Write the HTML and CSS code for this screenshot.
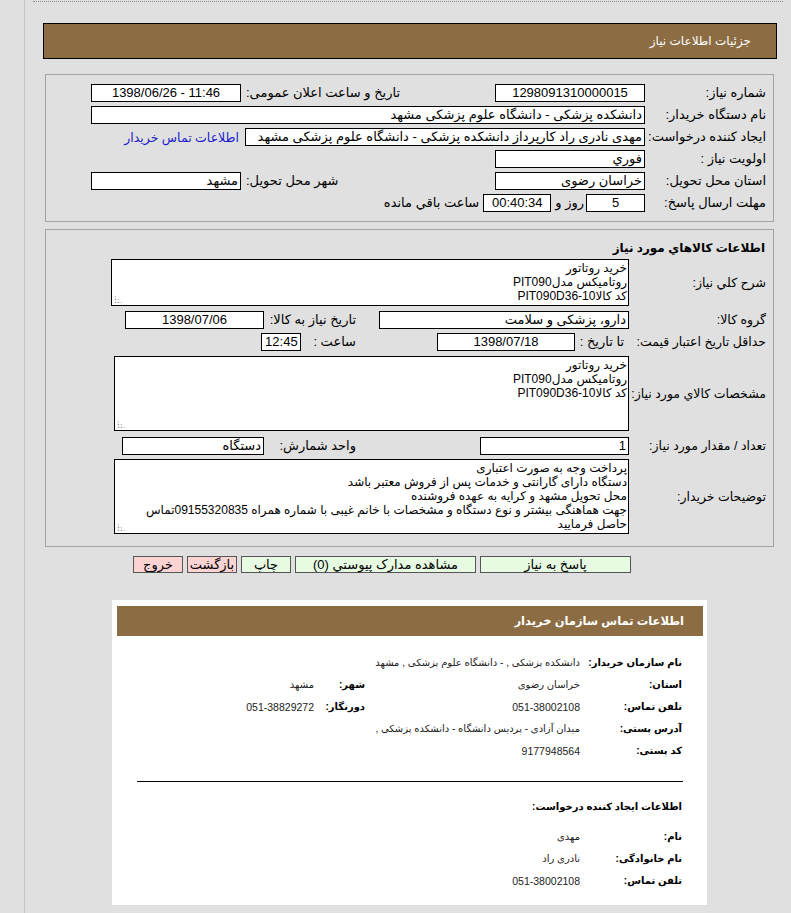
FILE: index.html
```html
<!DOCTYPE html>
<html lang="fa" dir="rtl">
<head>
<meta charset="utf-8">
<title>جزئیات اطلاعات نیاز</title>
<link rel="stylesheet" href="styles.css">
</head>
<body>
<div class="page">
  <div class="dots"></div>
  <div class="title-bar">جزئیات اطلاعات نیاز</div>

  <div class="box box1">
    <div class="grid1">
      <div class="lbl">شماره نیاز:</div>
      <div class="fld c">1298091310000015</div>
      <div class="lbl2">تاریخ و ساعت اعلان عمومی:</div>
      <div class="fld c" dir="ltr">1398/06/26 - 11:46</div>

      <div class="lbl">نام دستگاه خریدار:</div>
      <div class="fld span3">دانشکده پزشکی - دانشگاه علوم پزشکی مشهد</div>

      <div class="lbl">ایجاد کننده درخواست:</div>
      <div class="span3 inline">
        <div class="fld w400">مهدی نادری راد کارپرداز دانشکده پزشکی - دانشگاه علوم پزشکی مشهد</div>
        <a class="link" href="#">اطلاعات تماس خریدار</a>
      </div>

      <div class="lbl">اولویت نیاز :</div>
      <div class="fld">فوري</div>
      <div></div>
      <div></div>

      <div class="lbl">استان محل تحویل:</div>
      <div class="fld">خراسان رضوی</div>
      <div class="lbl2">شهر محل تحویل:</div>
      <div class="fld">مشهد</div>

      <div class="lbl">مهلت ارسال پاسخ:</div>
      <div class="span3 inline">
        <div class="fld c w59">5</div>
        <span class="days">روز و</span>
        <div class="fld c w68">00:40:34</div>
        <span class="remain">ساعت باقي مانده</span>
      </div>
    </div>
  </div>

  <div class="box box2">
    <div class="sec-title">اطلاعات کالاهاي مورد نياز</div>

    <div class="r2 r-ta1">
      <div class="lbl2c">شرح کلي نياز:</div>
      <div class="ta ta1">خرید روتاتور<br>روتامیکس مدلPIT090<br>کد کالاPIT090D36-10<span class="grip"></span></div>
    </div>

    <div class="r2 r-gk">
      <div class="lbl2c">گروه کالا:</div>
      <div class="fld w250">دارو، پزشکی و سلامت</div>
      <div class="sub sub115">تاریخ نیاز به کالا:</div>
      <div class="fld c w139">1398/07/06</div>
    </div>

    <div class="r2 r-hd">
      <div class="lbl2c">حداقل تاریخ اعتبار قیمت:</div>
      <div class="sub sub54">تا تاریخ :</div>
      <div class="fld c w138">1398/07/18</div>
      <div class="hour">ساعت :</div>
      <div class="fld c w40">12:45</div>
    </div>

    <div class="r2 r-ta2">
      <div class="lbl2c">مشخصات کالاي مورد نياز:</div>
      <div class="ta ta2">خرید روتاتور<br>روتامیکس مدلPIT090<br>کد کالاPIT090D36-10<span class="grip"></span></div>
    </div>

    <div class="r2 r-te">
      <div class="lbl2c">تعداد / مقدار مورد نياز:</div>
      <div class="fld w149">1</div>
      <div class="sub sub216">واحد شمارش:</div>
      <div class="fld w142">دستگاه</div>
    </div>

    <div class="r2 r-ta3">
      <div class="lbl2c">توضیحات خریدار:</div>
      <div class="ta ta3">پرداخت وجه به صورت اعتباری<br>دستگاه دارای گارانتی و خدمات پس از فروش معتبر باشد<br>محل تحویل مشهد و کرایه به عهده فروشنده<br>جهت هماهنگی بیشتر و نوع دستگاه و مشخصات با خانم غیبی با شماره همراه 09155320835تماس<br>حاصل فرمایید<span class="grip"></span></div>
    </div>
  </div>

  <div class="actions">
    <a class="btn green b151" href="#">پاسخ به نیاز</a>
    <a class="btn green b181" href="#">مشاهده مدارک پیوستي (0)</a>
    <a class="btn green b50" href="#">چاپ</a>
    <a class="btn pink b50" href="#">بازگشت</a>
    <a class="btn pink b50" href="#">خروج</a>
  </div>

  <div class="panel">
    <div class="panel-head">اطلاعات تماس سازمان خریدار</div>
    <div class="info">
      <div class="irow"><b class="k1">نام سازمان خریدار:</b><span class="v1">دانشکده پزشکی , - دانشگاه علوم پزشکی , مشهد</span></div>
      <div class="irow"><b class="k1">استان:</b><span class="v1">خراسان رضوی</span><b class="k2">شهر:</b><span class="v2">مشهد</span></div>
      <div class="irow"><b class="k1">تلفن تماس:</b><span class="v1 num">051-38002108</span><b class="k2">دورنگار:</b><span class="v2 num">051-38829272</span></div>
      <div class="irow"><b class="k1">آدرس پستی:</b><span class="v1 wide">میدان آزادی - پردیس دانشگاه - دانشکده پزشکی ,</span></div>
      <div class="irow"><b class="k1">کد پستی:</b><span class="v1 num">9177948564</span></div>
    </div>
    <div class="rule"></div>
    <div class="info2">
      <div class="irow"><b class="k1 wide">اطلاعات ایجاد کننده درخواست:</b></div>
      <div class="irow gap"><b class="k1">نام:</b><span class="v1">مهدی</span></div>
      <div class="irow"><b class="k1">نام خانوادگی:</b><span class="v1">نادری راد</span></div>
      <div class="irow"><b class="k1">تلفن تماس:</b><span class="v1 num">051-38002108</span></div>
    </div>
  </div>
</div>
</body>
</html>
```

FILE: styles.css
```css
* { box-sizing: border-box; }

html, body {
  margin: 0;
  padding: 0;
  height: 100%;
  overflow: hidden;
}

body {
  background: #e0e0e0;
  font-family: "Liberation Sans", "DejaVu Sans", sans-serif;
  font-size: 13px;
  color: #000;
}

a { text-decoration: none; color: inherit; }

.page {
  width: 767px;
  height: 913px;
  border-left: 1px solid #c4c4c4;
  padding-top: 1px;
}

.dots {
  margin: 0 8px 0 8px;
  border-top: 1px dotted #8e8e8e;
  height: 1px;
}

.title-bar {
  margin: 21px 14px 0 18px;
  height: 36px;
  border: 1px solid #000;
  background: #8c6d43;
  color: #fff;
  font-size: 12px;
  line-height: 34px;
  padding-right: 25px;
}

.box {
  margin: 15px 17px 0 20px;
  border: 1px solid #a3a3a3;
}

.box1 { padding: 9px 7px 9px 0; }

.grid1 {
  display: grid;
  grid-template-columns: 121px 150px 254px 150px;
  grid-auto-rows: 18px;
  row-gap: 4px;
}

.lbl, .lbl2, .lbl2c, .sub, .hour, .days, .remain {
  line-height: 18px;
  white-space: nowrap;
}

.lbl2 {
  text-align: left;
  padding-left: 5px;
}

.fld {
  height: 18px;
  border: 1px solid #000;
  background: #fff;
  line-height: 16px;
  padding: 0 2px;
  white-space: nowrap;
  overflow: hidden;
}

.fld.c { text-align: center; }

.span3 { grid-column: span 3; }

.inline {
  display: flex;
  align-items: center;
}

.w400 { width: 400px; }
.w59 { width: 59px; }
.w68 { width: 68px; }
.w250 { width: 250px; }
.w139 { width: 139px; }
.w138 { width: 138px; }
.w40 { width: 40px; }
.w149 { width: 149px; }
.w142 { width: 142px; }

.link {
  color: #1c1ccc;
  margin-right: 6px;
  white-space: nowrap;
  font-size: 12.5px;
}

.days { margin: 0 2px 0 4px; }
.remain { margin-right: 4px; }

.box2 {
  margin-top: 7px;
  padding: 10px 7px 12px 0;
}

.sec-title {
  font-weight: bold;
  font-size: 12px;
  line-height: 16px;
  margin-right: 1px;
}

.r2 {
  display: flex;
  align-items: center;
}

.lbl2c { width: 137px; flex: none; font-size: 12.5px; }

.r-ta1 { margin-top: 3px; }
.r-gk { margin-top: 5px; }
.r-hd { margin-top: 4px; }
.r-ta2 { margin-top: 5px; }
.r-te { margin-top: 6px; }
.r-ta3 { margin-top: 4px; }

.ta {
  position: relative;
  border: 1px solid #000;
  background: #fff;
  font-size: 12px;
  line-height: 14px;
  padding: 1px 1px 0 2px;
  white-space: nowrap;
  overflow: hidden;
}

.ta1 { width: 518px; height: 47px; }
.ta2 { width: 515px; height: 75px; }
.ta3 { width: 515px; height: 75px; }

.grip {
  position: absolute;
  left: 2px;
  bottom: 2px;
  width: 8px;
  height: 8px;
  background-image: radial-gradient(circle, #a8a8a8 0.8px, transparent 1.1px);
  background-size: 3px 3px;
  clip-path: polygon(0 0, 0 100%, 100% 100%);
}

.sub { flex: none; }
.sub115 { width: 115px; padding-right: 23px; }
.sub54 { width: 54px; padding-right: 5px; }
.sub216 { width: 216px; padding-right: 124px; }

.hour { margin: 0 81px 0 12px; }

.actions {
  display: flex;
  gap: 4px;
  margin: 9px 160px 0 0;
}

.btn {
  height: 17px;
  border: 1px solid #555;
  text-align: center;
  line-height: 15px;
  color: #000;
  white-space: nowrap;
}

.green { background: #e6fbe2; }
.pink { background: #fbd3d3; }
.b151 { width: 151px; }
.b181 { width: 181px; }
.b50 { width: 50px; }

.panel {
  width: 595px;
  height: 305px;
  margin: 27px 84px 0 0;
  background: #fff;
  padding-top: 6px;
}

.panel-head {
  margin: 0 4px 0 5px;
  height: 30px;
  background: #8c6d43;
  color: #fff;
  font-weight: bold;
  font-size: 11.5px;
  line-height: 30px;
  padding-right: 19px;
}

.info { margin-top: 16px; padding-right: 25px; }
.info2 { margin-top: 14px; padding-right: 25px; }

.irow {
  display: flex;
  height: 22px;
  line-height: 22px;
  font-size: 10px;
  white-space: nowrap;
}

.irow.gap { margin-top: 8px; }

.k1 { width: 102px; flex: none; color: #000; }
.k1.wide { width: auto; }
.v1 { width: 215px; flex: none; color: #222; }
.v1.wide { width: auto; }
.k2 { width: 51px; flex: none; color: #000; }
.v2 { color: #222; }
.num { font-size: 10.5px; }

.rule {
  margin: 19px 24px 0 25px;
  border-top: 1px solid #000;
}
```
